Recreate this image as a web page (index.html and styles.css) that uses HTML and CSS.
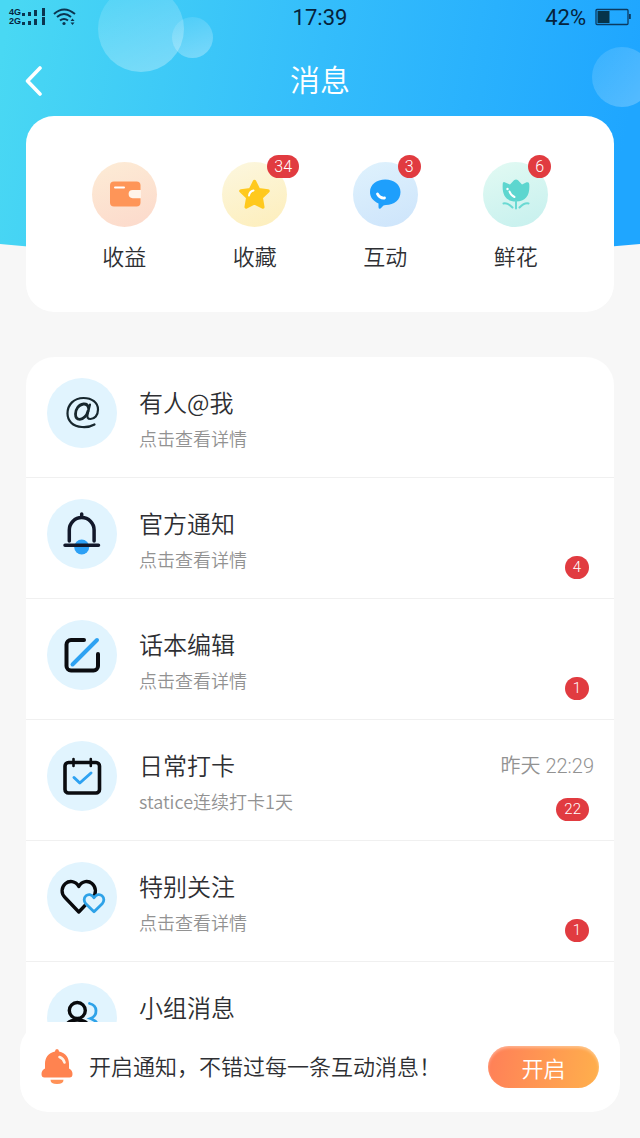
FILE: index.html
```html
<!DOCTYPE html>
<html lang="zh-CN">
<head>
<meta charset="utf-8">
<meta name="viewport" content="width=device-width, initial-scale=1">
<title>消息</title>
<link rel="stylesheet" href="styles.css">
</head>
<body>
<div class="app">
  <div class="backdrop" aria-hidden="true">
    <svg class="backdrop-shape" viewBox="0 0 640 260" preserveAspectRatio="none">
      <defs>
        <linearGradient id="sky" gradientUnits="userSpaceOnUse" x1="0" y1="60" x2="620" y2="170">
          <stop offset="0" stop-color="#49d8f3"/>
          <stop offset=".5" stop-color="#34bdfb"/>
          <stop offset="1" stop-color="#1fa6ff"/>
        </linearGradient>
      </defs>
      <path d="M0 0H640V244Q320 275 0 244Z" fill="url(#sky)"/>
    </svg>
    <span class="bubble bubble-small"></span>
    <span class="bubble bubble-large"></span>
    <span class="bubble bubble-right"></span>
  </div>

  <div class="status">
    <div class="status-left">
      <div class="networks"><span>4G</span><span>2G</span></div>
      <svg width="24" height="18" viewBox="0 0 24 18" fill="#0b3550">
        <path d="M0 5h3v3H0zM6 4h3v4H6zM12 2h3v6h-3zM20 0h3v8h-3zM0 14h3v3H0zM6 13h3v4H6zM12 11h3v6h-3zM20 9h3v8h-3z"/>
      </svg>
      <svg class="wifi" width="24" height="18" viewBox="0 0 24 18" fill="none" stroke="#0b3550" stroke-width="2">
        <path d="M1 6Q11-3 22 6M4 9Q11 3 18 9M7 12.500Q11 9.500 15 12.500"/>
        <circle cx="11" cy="15.500" r="1.600" fill="#0b3550" stroke="none"/>
        <path d="M17.500 13L19.500 10.500L21.500 13ZM17.500 14.500L19.500 17L21.500 14.500Z" fill="#0b3550" stroke="none"/>
      </svg>
    </div>
    <time>17:39</time>
    <div class="status-right">
      <span>42%</span>
      <svg width="36" height="18" viewBox="0 0 36 18">
        <rect x="1" y="1.500" width="32" height="15" rx="1" fill="none" stroke="#0b3a60" stroke-width="1.300"/>
        <path d="M2.500 3h12v12h-12z" fill="#06344a"/>
        <path d="M34 6h1.800v5H34z" fill="#0b3a60"/>
      </svg>
    </div>
  </div>

  <header class="nav">
    <button class="back" type="button" aria-label="返回">
      <svg width="18" height="30" viewBox="0 0 18 30" fill="none" stroke="#fff" stroke-width="3.600" stroke-linecap="round" stroke-linejoin="round"><path d="M15 2L2.500 15L15 28"/></svg>
    </button>
    <h1>消息</h1>
  </header>

  <nav class="shortcuts">
    <a class="shortcut" href="#income">
      <span class="shortcut-icon orange">
        <svg viewBox="0 0 65 65">
          <rect x="18" y="19.500" width="30.500" height="25" rx="4" fill="#fe9558"/>
          <path d="M49 28H40.700a4.100 4.100 0 0 0 0 8.200H49Z" fill="#fff3e8"/>
          <path d="M23 25.500h9" stroke="#fff" stroke-width="2" stroke-linecap="round"/>
        </svg>
      </span>
      <span>收益</span>
    </a>
    <a class="shortcut" href="#favorites">
      <span class="shortcut-icon yellow">
        <svg viewBox="0 0 65 65">
          <path d="M32.500 19.500L36.600 27.700L46 29L39.200 35.500L40.800 45L32.500 40.700L24.200 45L25.800 35.500L19 29L28.400 27.700Z" fill="#ffc91e" stroke="#ffc91e" stroke-width="3.500" stroke-linejoin="round"/>
          <path d="M27 33.500Q27.500 29.500 31.500 28.500" fill="none" stroke="#fff" stroke-width="2" stroke-linecap="round"/>
        </svg>
        <b class="badge">34</b>
      </span>
      <span>收藏</span>
    </a>
    <a class="shortcut" href="#interactions">
      <span class="shortcut-icon blue">
        <svg viewBox="0 0 65 65">
          <path d="M32.300 17.500C41 17.500 47.500 22.500 47.500 30C47.500 38 41 43 33 43Q31 43 30.500 43.500L27.500 46.500Q25.500 47.500 25.500 45V41.500C20 39 17 35 17 30C17 22.500 23.500 17.500 32.300 17.500Z" fill="#1e9ffc"/>
          <path d="M24.500 32Q27 36.500 31.500 36" fill="none" stroke="#fff" stroke-width="2.800" stroke-linecap="round"/>
        </svg>
        <b class="badge">3</b>
      </span>
      <span>互动</span>
    </a>
    <a class="shortcut" href="#flowers">
      <span class="shortcut-icon green">
        <svg viewBox="0 0 65 65">
          <path d="M21 20Q19.500 20 19.700 22.500C19 33 23 39.500 33 39.500C43 39.500 47 33 46.300 22.500Q46.300 19.500 43.500 20.300L39 22.500L35 18.300Q33 16.500 31 18.300L27 22.500Z" fill="#5dd6cf"/>
          <path d="M33 39v7.500M20.500 41.500Q24.500 40.500 29.500 45.500M45.500 41.500Q41.500 40.500 36.500 45.500" fill="none" stroke="#6ad9d3" stroke-width="2" stroke-linecap="round"/>
          <path d="M26.500 29.500Q27.500 33 31.500 35" fill="none" stroke="#fff" stroke-width="2" stroke-linecap="round"/>
          <circle cx="24.500" cy="27" r="1.200" fill="#fff"/>
        </svg>
        <b class="badge">6</b>
      </span>
      <span>鲜花</span>
    </a>
  </nav>

  <main class="messages">
    <a class="row" href="#mentions">
      <svg class="row-icon" viewBox="0 0 70 70">
        <g fill="none" stroke="#17272e" stroke-linecap="round">
          <path d="M47.500 46.500Q42.500 49.500 35 49C25.500 48.500 20.500 42.500 20.500 35.500C20.500 26.500 27 20 36.500 20C45 20 51 24.500 51 31.500C51 37.500 47.500 41 43.500 41C40.500 41 40 39 40.500 36.500L43 26.500" stroke-width="2.200"/>
          <path d="M41.500 30C41 27 39 25.800 36.500 26C31.500 26.500 28.500 31.500 28.500 36C28.500 39.500 30 41.300 32.800 41.300C36.500 41.300 40 37.500 41 33" stroke-width="2.800"/>
        </g>
      </svg>
      <div class="row-text"><h2>有人@我</h2><p>点击查看详情</p></div>
    </a>
    <a class="row" href="#official">
      <svg class="row-icon" viewBox="0 0 70 70">
        <circle cx="34.700" cy="48" r="7.500" fill="#2ca0f5"/>
        <g fill="none" stroke="#12182a" stroke-width="3.500" stroke-linecap="round">
          <path d="M34.700 15v3M22.300 42V31a12.300 12.300 0 0 1 24.800 0V42M18 46.200H51.500"/>
        </g>
      </svg>
      <div class="row-text"><h2>官方通知</h2><p>点击查看详情</p></div>
      <div class="row-meta"><b class="badge">4</b></div>
    </a>
    <a class="row" href="#scripts">
      <svg class="row-icon" viewBox="0 0 70 70">
        <g fill="none" stroke-width="4" stroke-linecap="round">
          <path d="M37 20H24a4.500 4.500 0 0 0-4.500 4.500V46a4.500 4.500 0 0 0 4.500 4.500H46.500A4.500 4.500 0 0 0 51 46V34" stroke="#0b0c10"/>
          <path d="M25.500 44.500L50 20" stroke="#2ea2f2"/>
        </g>
      </svg>
      <div class="row-text"><h2>话本编辑</h2><p>点击查看详情</p></div>
      <div class="row-meta"><b class="badge">1</b></div>
    </a>
    <a class="row" href="#checkin">
      <svg class="row-icon" viewBox="0 0 70 70">
        <g fill="none" stroke-linecap="round" stroke-linejoin="round">
          <rect x="18" y="21.500" width="34.500" height="30.500" rx="3.500" stroke="#0b0c10" stroke-width="3.600"/>
          <path d="M26.500 18v7M43.800 18v7" stroke="#0b0c10" stroke-width="2.600"/>
          <path d="M27 36.500L32.800 42L44 32" stroke="#2ea2f2" stroke-width="3"/>
        </g>
      </svg>
      <div class="row-text"><h2>日常打卡</h2><p>statice连续打卡1天</p></div>
      <div class="row-meta"><time>昨天 22:29</time><b class="badge">22</b></div>
    </a>
    <a class="row" href="#following">
      <svg class="row-icon" viewBox="0 0 70 70">
        <path d="M31.800 24.500C28.500 18.500 22 18.500 18.500 21.500C14 25.500 14 31.500 18 35.500L31.800 50L45.500 35.500C49.500 31.500 49.500 25.500 45 21.500C41.500 18.500 35 18.500 31.800 24.500Z" fill="none" stroke="#08090c" stroke-width="3.300" stroke-linejoin="round"/>
        <path d="M47 35.800C44.500 31.800 41 32 39 33.800C36.500 36 36.700 39.500 38.800 41.700L47 49.800L55.200 41.700C57.300 39.500 57.500 36 55 33.800C53 32 49.500 31.800 47 35.800Z" fill="#e1f4fe" stroke="#2ea2e8" stroke-width="2.800" stroke-linejoin="round"/>
      </svg>
      <div class="row-text"><h2>特别关注</h2><p>点击查看详情</p></div>
      <div class="row-meta"><b class="badge">1</b></div>
    </a>
    <a class="row" href="#groups">
      <svg class="row-icon" viewBox="0 0 70 70">
        <g fill="none" stroke-width="3.400" stroke-linecap="round">
          <circle cx="30.300" cy="27.500" r="8" stroke="#08090c"/>
          <path d="M16 51C16 42 22 37 30.300 37S44.500 42 44.500 51Z" stroke="#08090c"/>
          <path d="M42.500 20.500C51 22.500 51 32.500 43.500 35.500Q53 39 53.500 50" stroke="#2ea2e8" stroke-width="2.800"/>
        </g>
      </svg>
      <div class="row-text"><h2>小组消息</h2></div>
    </a>
  </main>

  <aside class="notice">
    <svg width="32" height="36" viewBox="0 0 32 36">
      <path d="M16 0Q18 0 18 2.500C25 4 28 9 28 15V19.500Q31.500 21 31.500 25Q31.500 28.500 28.500 28.500H3.500Q.5 28.500.5 25Q.5 21 4 19.500V15C4 9 7 4 14 2.500Q14 0 16 0Z" fill="#ff8350"/>
      <path d="M18.500 8Q22.500 9.500 23.500 13.500" fill="none" stroke="#fff3e8" stroke-width="2.600" stroke-linecap="round"/>
      <path d="M9.500 30.700h13Q22.500 35 16 35T9.500 30.700Z" fill="#ff9157"/>
    </svg>
    <p>开启通知，不错过每一条互动消息！</p>
    <button class="enable" type="button">开启</button>
  </aside>
</div>
</body>
</html>
```
FILE: styles.css
```css
* {
  box-sizing: border-box;
}

body {
  margin: 0;
  background: #f7f7f7;
  color: #2e2f33;
  font-family: Roboto, "Noto Sans CJK SC", sans-serif;
  font-weight: 350;
}

h1, h2, p {
  margin: 0;
  font-weight: inherit;
}

a {
  color: inherit;
  text-decoration: none;
}

button {
  border: 0;
  padding: 0;
  background: none;
  color: inherit;
  font: inherit;
  cursor: pointer;
}

svg {
  display: block;
}

.app {
  position: relative;
  display: flex;
  flex-direction: column;
  height: 100vh;
  overflow: hidden;
}

/* Blue sky behind the header */
.backdrop {
  position: absolute;
  inset: 0 0 auto;
  height: 260px;
  overflow: hidden;
}

.backdrop-shape {
  width: 100%;
  height: 100%;
}

.bubble {
  position: absolute;
  border-radius: 50%;
  background: linear-gradient(160deg, rgba(255, 255, 255, .08), rgba(255, 255, 255, .32));
}

.bubble-large {
  left: 98px;
  top: -14px;
  width: 86px;
  height: 86px;
}

.bubble-small {
  left: 172px;
  top: 17px;
  width: 41px;
  height: 41px;
}

.bubble-right {
  right: -12px;
  top: 47px;
  width: 60px;
  height: 60px;
  background: linear-gradient(130deg, rgba(255, 255, 255, .1), rgba(255, 255, 255, .26));
}

/* Status bar */
.status {
  position: relative;
  display: grid;
  grid-template-columns: 1fr auto 1fr;
  align-items: center;
  height: 34px;
  padding: 0 9px;
  color: #06233c;
  font-size: 22px;
  font-weight: 400;
}

.status-left,
.status-right {
  display: flex;
  align-items: center;
}

.status-right {
  justify-content: flex-end;
  gap: 9px;
}

.networks {
  display: grid;
  width: 13px;
  font: bold 9px/9px "Liberation Sans", sans-serif;
}

.wifi {
  margin-left: 7px;
}

/* Title bar */
.nav {
  position: relative;
  display: grid;
  grid-template-columns: 60px 1fr 60px;
  align-items: center;
  height: 82px;
  padding-top: 12px;
  color: #fff;
}

.nav h1 {
  font-size: 30px;
  line-height: 40px;
  text-align: center;
}

.back {
  padding-left: 25px;
}

/* Shortcut card */
.shortcuts {
  position: relative;
  display: grid;
  grid-template-columns: repeat(4, 1fr);
  margin: 0 26px;
  padding: 46px 33px 38px;
  border-radius: 28px;
  background: #fff;
}

.shortcut {
  display: flex;
  flex-direction: column;
  align-items: center;
  gap: 15px;
  font-size: 22px;
  line-height: 32px;
}

.shortcut-icon {
  position: relative;
  width: 65px;
  height: 65px;
  border-radius: 50%;
}

.orange { background: linear-gradient(160deg, #fdecd6, #fcd9cb); }
.yellow { background: linear-gradient(160deg, #fcf7df, #fdeebb); }
.blue { background: linear-gradient(160deg, #dff2fd, #cde4fb); }
.green { background: linear-gradient(160deg, #e2faf3, #c6f0ee); }

.badge {
  min-width: 23px;
  height: 23px;
  padding: 0 8px;
  border-radius: 12px;
  background: #e13b40;
  color: #fff;
  font-size: 15px;
  font-weight: 350;
  line-height: 23px;
  text-align: center;
}

.shortcut-icon .badge {
  position: absolute;
  left: 45px;
  top: -7px;
  padding: 0 7px;
  font-size: 16px;
}

/* Message list */
.messages {
  position: relative;
  flex: 1;
  min-height: 0;
  margin: 45px 26px 0;
  overflow-y: auto;
  scrollbar-width: none;
  border-radius: 28px 28px 0 0;
  background: #fff;
}

.row {
  display: flex;
  align-items: flex-start;
  min-height: 121px;
  padding: 21px 20px 19px 21px;
  border-bottom: 1px solid #f0f0f0;
}

.row-icon {
  flex: none;
  width: 70px;
  height: 70px;
  border-radius: 50%;
  background: #e1f4fe;
}

.row-text {
  display: grid;
  flex: 1;
  gap: 8px;
  padding: 8px 0 0 22px;
  font-family: "Noto Sans CJK SC", sans-serif;
}

.row-text h2 {
  font-size: 24px;
  line-height: 32px;
}

.row-text p {
  color: #929292;
  font-size: 18px;
  line-height: 24px;
}

.row-meta {
  display: flex;
  flex-direction: column;
  align-items: flex-end;
  align-self: stretch;
  justify-content: flex-end;
  gap: 20px;
}

.row-meta time {
  color: #929292;
  font-size: 20px;
  line-height: 24px;
}

.row-meta .badge {
  margin-right: 5px;
}

/* Notification prompt, overlapping the end of the list */
.notice {
  position: relative;
  display: flex;
  align-items: center;
  min-height: 90px;
  margin: -18px 20px 26px;
  padding: 0 21px;
  border-radius: 28px;
  background: #fff;
}

.notice p {
  flex: 1;
  padding: 2px 0 0 16px;
  font-size: 22px;
  line-height: 32px;
  white-space: nowrap;
}

.enable {
  width: 111px;
  height: 42px;
  border-radius: 21px;
  background: linear-gradient(100deg, #ff7f58, #ffb04c);
  box-shadow: inset 0 2px 3px rgba(255, 255, 255, .35);
  color: #fff;
  font-size: 22px;
}
```
